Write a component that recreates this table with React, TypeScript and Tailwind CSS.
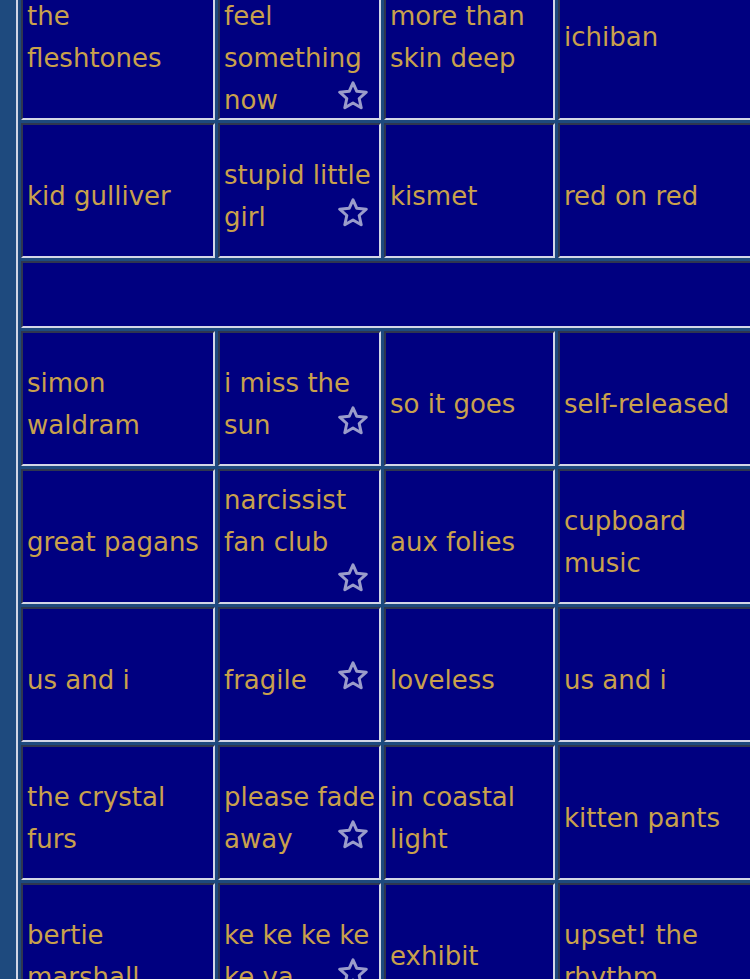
type Cell = {
  lines: string[]
  star?: 'inline' | 'below'
}

type Row = Cell[] | null

const rows: Row[] = [
  [
    { lines: ['the', 'fleshtones'] },
    { lines: ['i want to', 'feel', 'something', 'now'], star: 'inline' },
    { lines: ['more than', 'skin deep'] },
    { lines: ['ichiban'] },
  ],
  [
    { lines: ['kid gulliver'] },
    { lines: ['stupid little', 'girl'], star: 'inline' },
    { lines: ['kismet'] },
    { lines: ['red on red'] },
  ],
  null,
  [
    { lines: ['simon', 'waldram'] },
    { lines: ['i miss the', 'sun'], star: 'inline' },
    { lines: ['so it goes'] },
    { lines: ['self-released'] },
  ],
  [
    { lines: ['great pagans'] },
    { lines: ['narcissist', 'fan club'], star: 'below' },
    { lines: ['aux folies'] },
    { lines: ['cupboard', 'music'] },
  ],
  [
    { lines: ['us and i'] },
    { lines: ['fragile'], star: 'inline' },
    { lines: ['loveless'] },
    { lines: ['us and i'] },
  ],
  [
    { lines: ['the crystal', 'furs'] },
    { lines: ['please fade', 'away'], star: 'inline' },
    { lines: ['in coastal', 'light'] },
    { lines: ['kitten pants'] },
  ],
  [
    { lines: ['bertie', 'marshall'] },
    { lines: ['ke ke ke ke', 'ke ya'], star: 'inline' },
    { lines: ['exhibit'] },
    { lines: ['upset! the', 'rhythm'] },
  ],
]

const colWidths = ['w-[194px]', 'w-[163px]', 'w-[171px]', 'w-[200px]']

function Star() {
  return (
    <svg width="30" height="29" viewBox="0 0 30 29" className="block blur-[0.5px]">
      <polygon
        points="15,1.8 18.8,10.3 28.3,11.2 21.2,17.5 23.2,26.8 15,22 6.8,26.8 8.8,17.5 1.7,11.2 11.2,10.3"
        fill="none"
        stroke="#9a9cca"
        strokeWidth="3"
        strokeLinejoin="round"
      />
    </svg>
  )
}

function TrackCell({ cell, width, tall }: { cell: Cell; width: string; tall: boolean }) {
  return (
    <td
      className={`${width} ${tall ? 'h-[176px]' : 'h-[135px]'} align-middle bg-[#000080] border-2 border-t-[#2e3650] border-l-[#2e3650] border-b-[#d2d6e6] border-r-[#d2d6e6] py-[2px] pl-[4px] pr-[2px]`}
    >
      <div className="translate-y-[5px]">
        {cell.lines.map((line, i) => (
          <span key={i}>
            {i === cell.lines.length - 1 && cell.star === 'inline' && (
              <span className="float-right w-[55px] h-[42px] flex justify-end pr-[9px] pt-[2px]">
                <Star />
              </span>
            )}
            <span className="whitespace-nowrap">{line}</span>
            {i < cell.lines.length - 1 && <br />}
          </span>
        ))}
        {cell.star === 'below' && (
          <div className="h-[42px] flex justify-end pr-[9px] pt-[0px]">
            <Star />
          </div>
        )}
      </div>
    </td>
  )
}

export default function App() {
  return (
    <div className="h-[979px] w-full overflow-hidden bg-[#1e4a7e]">
      <table
        className="ml-[16px] -mt-[61px] w-[747px] table-fixed border-separate border-spacing-[3px] border-2 border-t-[#d2d6e6] border-l-[#d2d6e6] border-b-[#2e3650] border-r-[#2e3650] text-[26px] leading-[42px] text-[#c9a14c]"
        style={{ fontFamily: '"DejaVu Sans", Verdana, sans-serif' }}
      >
        <tbody>
          {rows.map((row, r) =>
            row ? (
              <tr key={r}>
                {row.map((cell, c) => (
                  <TrackCell key={c} cell={cell} width={colWidths[c]} tall={r === 0} />
                ))}
              </tr>
            ) : (
              <tr key={r}>
                <td
                  colSpan={4}
                  className="h-[67px] bg-[#000080] border-2 border-t-[#2e3650] border-l-[#2e3650] border-b-[#d2d6e6] border-r-[#d2d6e6]"
                />
              </tr>
            )
          )}
        </tbody>
      </table>
    </div>
  )
}
